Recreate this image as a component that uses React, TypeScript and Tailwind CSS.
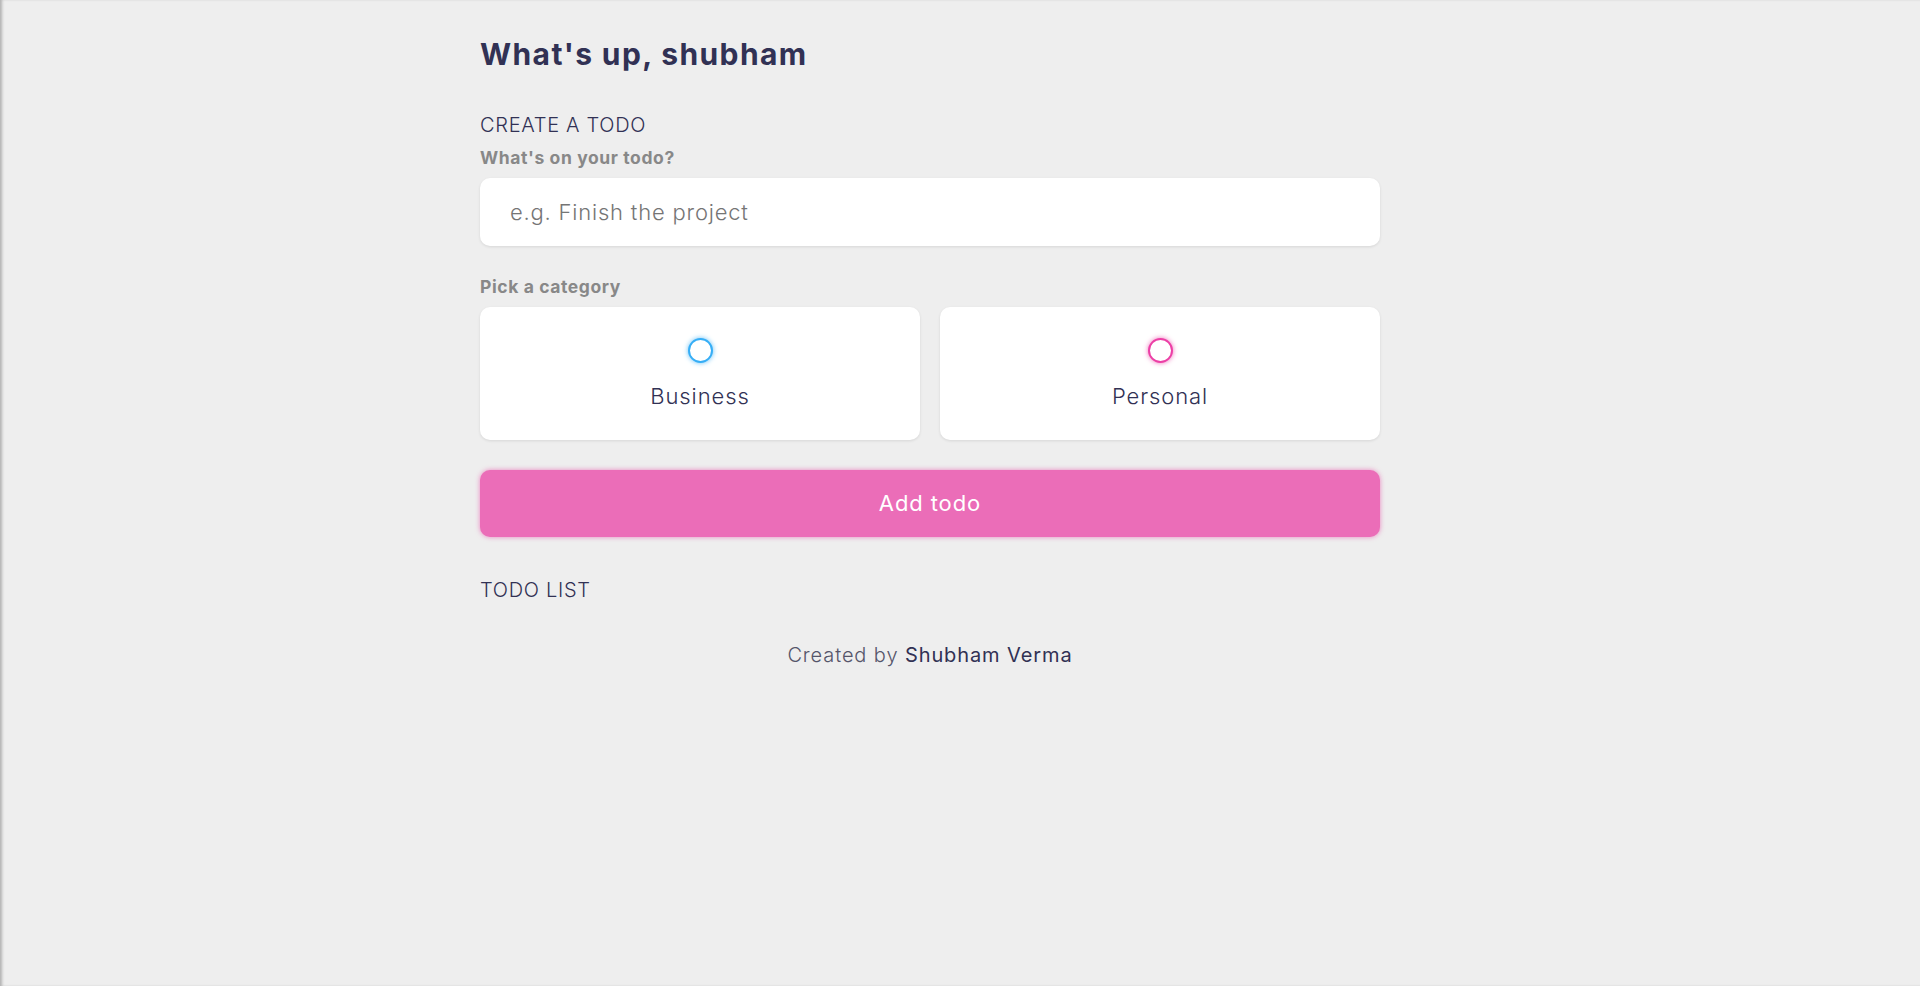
import { useState } from 'react';

const font = { fontFamily: 'Inter, "Noto Sans", sans-serif' };

export default function App() {
  const [todo, setTodo] = useState('');
  const [category, setCategory] = useState('');

  return (
    <div
      className="min-h-[986px] bg-[#eeeeee] pr-[60px] shadow-[inset_3px_0_3px_-1px_rgba(0,0,0,0.25)]"
      style={font}
    >
      <main className="mx-auto w-[900px] pt-[36px]">
        <section>
          <h2 className="text-[30px] font-bold leading-[36px] tracking-[1.4px] text-[#313154]">What's up, shubham</h2>
        </section>

        <section className="mt-[41px]">
          <h3 className="mb-[10px] text-[20px] font-light leading-[24px] tracking-[0.7px] text-[#313154]">CREATE A TODO</h3>
          <form onSubmit={e => e.preventDefault()}>
            <h4 className="mb-[10px] text-[17.5px] font-bold leading-[21px] tracking-[0.6px] text-[#888888]">What's on your todo?</h4>
            <input
              type="text"
              value={todo}
              onChange={e => setTodo(e.target.value)}
              placeholder="e.g. Finish the project"
              className="mb-[30px] block h-[68px] w-full rounded-[10px] bg-white px-[30px] text-[22px] tracking-[0.8px] text-[#313154] shadow-[0_1px_3px_rgba(0,0,0,0.1)] outline-none placeholder:font-light placeholder:text-[#757575]"
            />

            <h4 className="mb-[10px] text-[17.5px] font-bold leading-[21px] tracking-[0.6px] text-[#888888]">Pick a category</h4>
            <div className="mb-[30px] grid grid-cols-2 gap-[20px]">
              <label
                onClick={() => setCategory('business')}
                className="flex h-[133px] cursor-pointer flex-col items-center justify-center rounded-[10px] bg-white shadow-[0_1px_3px_rgba(0,0,0,0.1)]"
              >
                <span
                  className={`block h-[25px] w-[25px] rounded-full border-[2.5px] border-[#36aef6] shadow-[0_0_5px_rgba(54,174,246,0.75)] ${
                    category === 'business' ? 'bg-[#36aef6]' : 'bg-white'
                  }`}
                />
                <div className="mt-[20px] text-[22px] font-light leading-[27px] tracking-[0.9px] text-[#313154]">Business</div>
              </label>
              <label
                onClick={() => setCategory('personal')}
                className="flex h-[133px] cursor-pointer flex-col items-center justify-center rounded-[10px] bg-white shadow-[0_1px_3px_rgba(0,0,0,0.1)]"
              >
                <span
                  className={`block h-[25px] w-[25px] rounded-full border-[2.5px] border-[#ec3fa6] shadow-[0_0_5px_rgba(236,63,166,0.75)] ${
                    category === 'personal' ? 'bg-[#ec3fa6]' : 'bg-white'
                  }`}
                />
                <div className="mt-[20px] text-[22px] font-light leading-[27px] tracking-[0.9px] text-[#313154]">Personal</div>
              </label>
            </div>

            <button
              type="submit"
              className="block h-[67px] w-full cursor-pointer rounded-[10px] bg-[#eb6db8] text-[22px] font-normal tracking-[0.9px] text-white shadow-[0_0_5px_rgba(234,64,164,0.6)]"
            >
              Add todo
            </button>
          </form>
        </section>

        <section className="mt-[41px]">
          <h3 className="text-[20px] font-light leading-[24px] tracking-[0.7px] text-[#313154]">TODO LIST</h3>
        </section>

        <footer className="mt-[41px] text-center text-[20px] leading-[24px] tracking-[0.9px] text-[#55556a]">
          <span className="font-light">Created by </span>
          <span className="text-[#313154]">Shubham Verma</span>
        </footer>
      </main>
    </div>
  );
}
